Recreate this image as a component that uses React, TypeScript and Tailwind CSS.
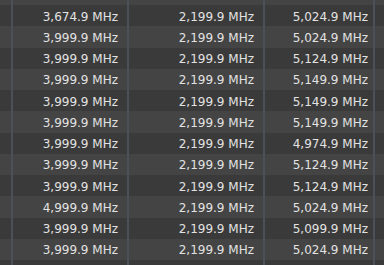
const rows: [string, string, string][] = [
  ['3,999.9', '2,199.9', '5,024.9'],
  ['3,674.9', '2,199.9', '5,024.9'],
  ['3,999.9', '2,199.9', '5,024.9'],
  ['3,999.9', '2,199.9', '5,124.9'],
  ['3,999.9', '2,199.9', '5,149.9'],
  ['3,999.9', '2,199.9', '5,149.9'],
  ['3,999.9', '2,199.9', '5,149.9'],
  ['3,999.9', '2,199.9', '4,974.9'],
  ['3,999.9', '2,199.9', '5,124.9'],
  ['3,999.9', '2,199.9', '5,124.9'],
  ['4,999.9', '2,199.9', '5,024.9'],
  ['3,999.9', '2,199.9', '5,099.9'],
  ['3,999.9', '2,199.9', '5,024.9'],
  ['3,999.9', '2,199.9', '5,024.9'],
];

function Sep() {
  return <div className="w-[2px] shrink-0 self-stretch bg-[#4b5059]" />;
}

export default function App() {
  return (
    <div className="w-[384px] h-[265px] overflow-hidden bg-[#3a3a3a] text-[12px] text-[#e2e2e2] font-['DejaVu_Sans',sans-serif]">
      <div className="-mt-[16.25px] flex flex-col">
        {rows.map((r, i) => (
          <div key={i} className={`flex h-[21.25px] items-center ${i % 2 === 0 ? 'bg-[#444444]' : 'bg-[#3a3a3a]'}`}>
            <div className="w-[11px] shrink-0" />
            <Sep />
            <div className="w-[114px] shrink-0 pr-[9px] pt-[2px] text-right">{r[0]} MHz</div>
            <Sep />
            <div className="w-[134px] shrink-0 pr-[9px] pt-[2px] text-right">{r[1]} MHz</div>
            <Sep />
            <div className="w-[108px] shrink-0 pr-[5px] pt-[2px] text-right">{r[2]} MHz</div>
            <Sep />
            <div className="flex-1" />
          </div>
        ))}
      </div>
    </div>
  );
}
